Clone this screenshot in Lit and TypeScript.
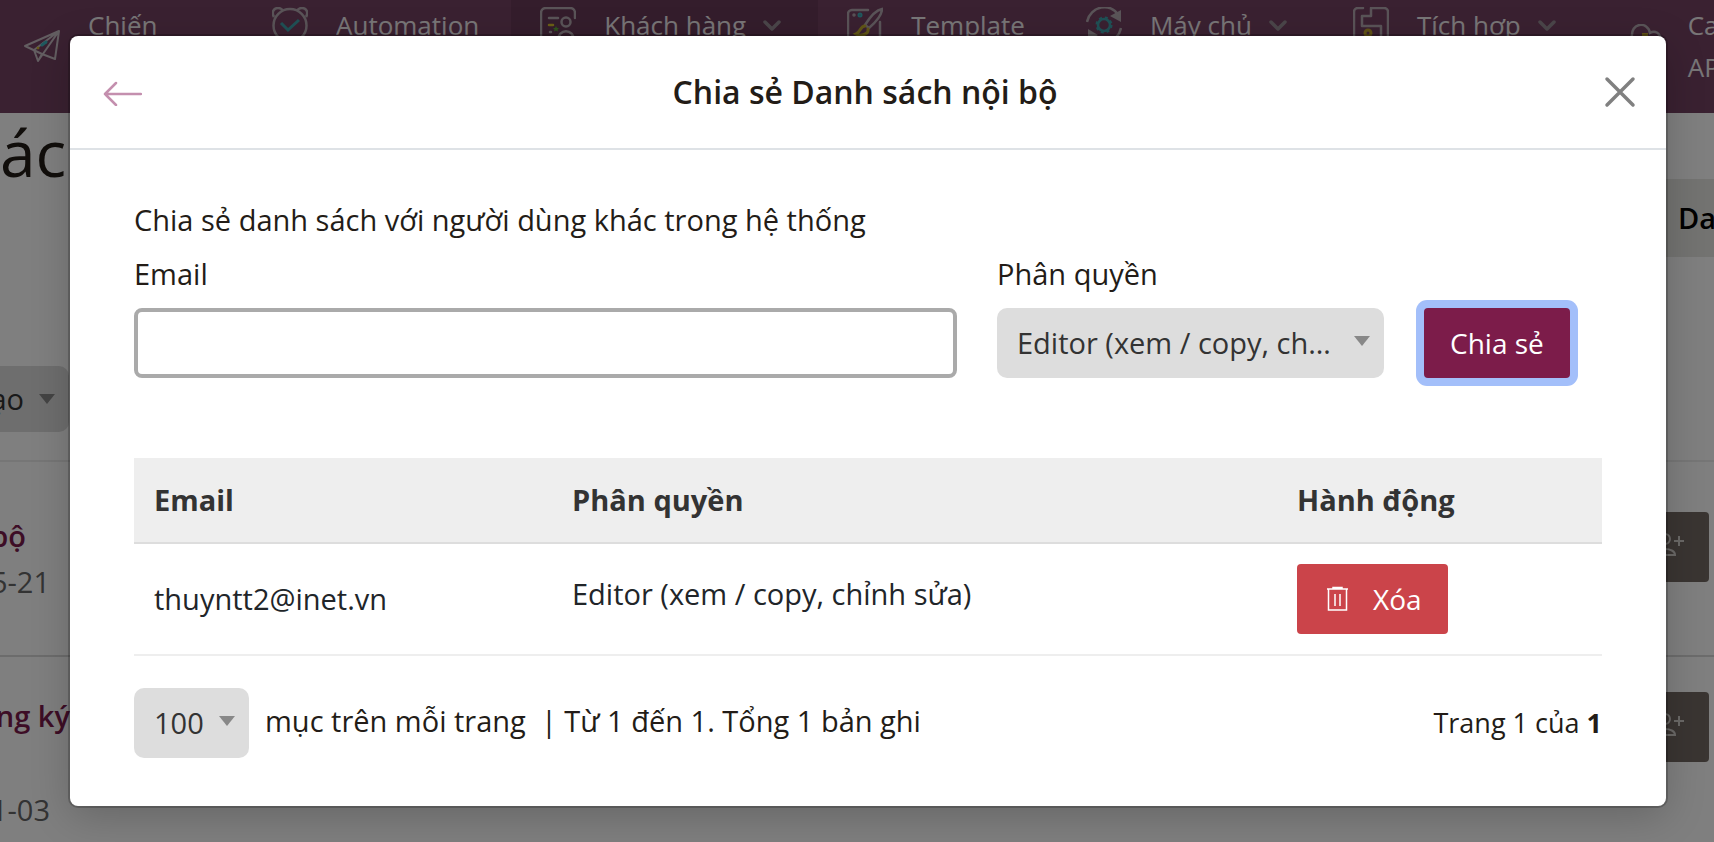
import { LitElement, html, css } from "lit";
import { customElement, state } from "lit/decorators.js";

const chevron = html`<svg class="chevron" viewBox="0 0 23 16" aria-hidden="true">
  <path d="M2 4l7 7 7-7" fill="none" stroke="#968d94" stroke-width="3.500" stroke-linecap="round" stroke-linejoin="round" />
</svg>`;

const icons = {
  plane: html`<svg class="icon" viewBox="0 0 36 36" fill="none" stroke="#c6bcc3" stroke-width="2" stroke-linejoin="round">
    <path d="M1 18L35 3L31 31L18 26ZM35 3L10 22L14 33L35 3M14 33L18 26" />
    <path d="M18 17l4-3" stroke="#3fb4bf" stroke-width="3" stroke-linecap="round" />
    <circle cx="14" cy="20" r="1" fill="#d5bd2c" stroke="#d5bd2c" stroke-width="1" />
  </svg>`,
  clock: html`<svg class="icon" viewBox="0 0 36 36" fill="none" stroke="#b4a8b0" stroke-width="2.500">
    <circle cx="18" cy="18.500" r="16.500" />
    <path d="M2 10C-1 5 2 1 6 1c3 0 4 1 5 3M34 10c3-5 0-9-4-9-3 0-4 1-5 3" />
    <path d="M9 16l7 7L27 13" stroke="#3fa3ad" stroke-width="3" />
  </svg>`,
  contacts: html`<svg class="icon" viewBox="0 0 36 36" fill="none" stroke="#b4a8b0" stroke-width="2.500" stroke-linecap="round">
    <path d="M8 35H6a5 5 0 0 1-5-5V6a5 5 0 0 1 5-5h24a5 5 0 0 1 5 5v5" />
    <circle cx="26" cy="15" r="4.500" />
    <path d="M18 34c0-13 16-13 16 0M9 11h9M10 25h1" />
    <path d="M9 18h4" stroke="#d5bd2c" />
    <path d="M16 19l1 2 2 0-1.500 1.500.5 2-2-1-2 1 .5-2L13 21l2 0z" fill="#5fa83a" stroke="none" />
  </svg>`,
  template: html`<svg class="icon" viewBox="0 0 36 36" fill="none" stroke="#b4a8b0" stroke-width="2.500" stroke-linecap="round">
    <path d="M21 3H5a4 4 0 0 0-4 4v25a3 3 0 0 0 3 3h26a3 3 0 0 0 3-3V15" />
    <path d="M18 18C23 10 29 3 35 2c0 6-6 13-13 19z" />
    <path d="M18 19c-5 0-4 6-9 8 5 3 13 0 12-5" stroke="#c2ad2c" stroke-width="3" />
    <circle cx="7" cy="8" r="1" stroke-width="1.500" /><circle cx="13" cy="8" r="1.500" stroke="#3fb4bf" stroke-width="2" />
  </svg>`,
  server: html`<svg class="icon" viewBox="0 0 36 36" fill="none" stroke="#b4a8b0" stroke-width="2.500">
    <path d="M1 15C4-1 25-5 32 8M35 21C32 37 11 41 4 28" />
    <path d="M35 3v12l-11-6zM2 34V22l10 6z" fill="#b4a8b0" stroke="none" />
    <circle cx="18" cy="18" r="6" stroke="#3fa3ad" stroke-width="2.500" />
    <circle cx="18" cy="18" r="7.500" stroke="#3fa3ad" stroke-width="2" stroke-dasharray="3 3" />
  </svg>`,
  puzzle: html`<svg class="icon" viewBox="0 0 36 36" fill="none" stroke="#b4a8b0" stroke-width="2.500" stroke-linejoin="round" stroke-linecap="round">
    <path d="M10 1H5a4 4 0 0 0-4 4v26a4 4 0 0 0 4 4h26a4 4 0 0 0 4-4V5a4 4 0 0 0-4-4H18v8H9v10h19v15" />
    <circle cx="15" cy="26" r="3" stroke="#c2a52c" stroke-width="3" />
  </svg>`,
  cloud: html`<svg class="icon" viewBox="0 0 36 36" fill="none" stroke="#b4a8b0" stroke-width="2.500">
    <path d="M6 27C-2 25-1 17 2 14 0-2 18-3 20 9c5-3 10 0 10 5 6 2 5 13-2 13z" />
    <path d="M12 9h6v8h-6z" fill="#c2a52c" stroke="none" />
  </svg>`,
};

const userPlus = html`<svg class="user-plus" viewBox="0 0 32 24" fill="none" stroke="#d6d2cf" stroke-width="2" aria-hidden="true">
  <circle cx="12" cy="6" r="5" /><path d="M2 22c0-8 20-8 20 0zM21 8h10M26 3v10" />
</svg>`;

@customElement("app-root")
export class AppRoot extends LitElement {
  @state() private nav = [
    { icon: icons.clock, label: "Automation", menu: false, active: false },
    { icon: icons.contacts, label: "Khách hàng", menu: true, active: true },
    { icon: icons.template, label: "Template", menu: false, active: false },
    { icon: icons.server, label: "Máy chủ", menu: true, active: false },
    { icon: icons.puzzle, label: "Tích hợp", menu: true, active: false },
  ];
  @state() private lists = [
    { name: "bộ", date: "5-21" },
    { name: "ng ký", date: "1-03" },
  ];
  @state() private shares = [{ email: "thuyntt2@inet.vn", role: "Editor (xem / copy, chỉnh sửa)" }];

  static styles = css`
    :host { display: block; position: relative; height: 100vh; overflow: hidden; background: #fff;
      font: 29px/42px "Open Sans", "Noto Sans", sans-serif; color: #231c17; }
    *, *::before { box-sizing: border-box; }
    button, input, select { font: inherit; margin: 0; }
    svg { display: block; flex: none; }
    .nav { display: flex; height: 113px; overflow: hidden; background: #754263; font-size: 26px; white-space: nowrap; }
    .nav-item { display: flex; flex: none; align-items: flex-start; padding: 4px 32px 0 29px; color: #fff; text-decoration: none; }
    .nav-item.active { background: #683a58; }
    .nav-item .label { margin-left: 28px; color: #fff; opacity: .9; }
    .nav-item .icon { margin-top: 3px; }
    .nav-item.wide { width: 243px; padding-left: 24px; white-space: normal; }
    .nav-item.wide .icon { margin-top: 24px; }
    .nav-item.last .icon { margin-top: 20px; }
    .nav-item.wide .label { width: 72px; }
    .nav-item.last { padding-left: 37px; padding-right: 0; white-space: normal; }
    .nav-item.last .label { width: 52px; margin-left: 22px; }
    .icon { width: 36px; height: 36px; }
    .chevron { width: 23px; height: 16px; margin: 14px 0 0 17px; }
    .title-row { display: flex; justify-content: space-between; height: 253px; }
    .title-row h1 { margin: 0; font-size: 64px; line-height: 80px; font-weight: 400; }
    .tab { width: 160px; height: 78px; margin-top: 66px; padding: 18px 0 0 124px; background: #e6e6e3; color: #000; font-weight: 600; overflow: hidden; }
    .toolbar { height: 96px; border-bottom: 2px solid #ececec; }
    .sort { display: flex; justify-content: flex-end; align-items: center; gap: 15px; width: 69px; height: 66px; padding-right: 14px;
      border-radius: 0 10px 10px 0; background: #ddd; color: #333; overflow: hidden; }
    .caret { flex: none; width: 16px; height: 10px; background: #888; clip-path: polygon(0 0, 100% 0, 50% 100%); }
    .list-row { display: flex; justify-content: space-between; height: 195px; border-bottom: 2px solid #d8d8d8; }
    .list-text { display: flex; flex-direction: column; align-items: flex-end; width: 70px; white-space: nowrap; }
    .list-text b { margin-top: 53px; color: #7b1a4c; font-weight: 600; }
    .date { color: #666; }
    .row-0 b { margin-right: 44px; } .row-0 .date { margin: 4px 20px 0 0; }
    .row-1 b { margin-top: 38px; } .row-1 .date { margin: 52px 20px 0 0; }
    .row-action { display: flex; align-items: center; justify-content: flex-end; width: 100px; height: 70px; margin: 50px 5px 0 0; padding: 0 24px 4px 0;
      border: 0; border-radius: 4px; background: #746a64; }
    .row-1 .row-action { margin-top: 35px; }
    .user-plus { width: 32px; height: 24px; }

    .overlay { position: absolute; inset: 0; padding: 36px 48px 36px 70px; background: rgb(0 0 0 / .5); }
    .modal { border-radius: 8px; background: #fff; box-shadow: 0 0 0 2px rgb(0 0 0 / .2), 0 10px 40px rgb(0 0 0 / .2); }
    .head { display: grid; grid-template-columns: 48px 1fr 60px; align-items: center; height: 114px; padding: 0 22px 0 28px; border-bottom: 2px solid #dee2e6; }
    .head h2 { margin: 0; text-align: center; font-size: 32px; font-weight: 600; }
    .ghost { display: flex; justify-content: center; justify-self: end; width: 48px; padding: 0; border: 0; background: none; }
    .body { padding: 49px 64px 48px; }
    .body p { margin: 0 0 12px; }
    .form { display: grid; grid-template-columns: 823fr 387fr 178fr; column-gap: 40px; align-items: end; }
    .field { display: flex; flex-direction: column; gap: 13px; min-width: 0; }
    .input { width: 100%; height: 70px; padding: 0 16px; border: 4px solid #aaa; border-radius: 8px; outline: 0; }
    .select { position: relative; display: flex; align-items: center; }
    .select .caret { position: absolute; right: 14px; top: 28px; pointer-events: none; }
    .select select { appearance: none; width: 100%; height: 70px; padding: 0 52px 0 20px; border: 0; border-radius: 10px; background: #ddd; color: #333; text-overflow: ellipsis; }
    .btn { display: inline-flex; align-items: center; height: 70px; padding: 0 26px; border: 0; border-radius: 4px; color: #fff; font-size: 28px; white-space: nowrap; }
    .share { justify-self: start; background: #7c1c4a; box-shadow: 0 0 0 8px #a3bffa; }
    .remove { gap: 22px; background: #cb444a; }
    table { width: 100%; margin-top: 80px; border-collapse: collapse; table-layout: fixed; }
    th, td { padding: 20px; text-align: left; }
    th { height: 85px; background: #eee; color: #333; font-weight: 700; }
    thead tr { border-bottom: 2px solid #ddd; }
    tbody tr { border-bottom: 2px solid #eee; color: #212529; }
    td.role { vertical-align: top; padding-top: 29px; }
    .c1 { width: 418px; } .c3 { width: 325px; }
    .foot { display: flex; align-items: center; margin-top: 32px; }
    .foot .select { width: 115px; }
    .foot .select select { padding-right: 36px; }
    .foot .info { margin: 0 auto 0 16px; padding-bottom: 4px; white-space: pre; }
    .foot .page { font-size: 27px; }
    .foot b { font-weight: 700; }
  `;

  render() {
    return html`
      <nav class="nav">
        <a class="nav-item wide" href="#">${icons.plane}<span class="label">Chiến dịch</span></a>
        ${this.nav.map((n) => html`<a class="nav-item ${n.active ? "active" : ""}" href="#">${n.icon}<span class="label">${n.label}</span>${n.menu ? chevron : ""}</a>`)}
        <a class="nav-item last" href="#">${icons.cloud}<span class="label">Call API</span></a>
      </nav>
      <main>
        <div class="title-row"><h1>ách</h1><div class="tab">Da</div></div>
        <div class="toolbar"><div class="sort"><span>ạo</span><i class="caret"></i></div></div>
        ${this.lists.map((l, i) => html`<div class="list-row row-${i}">
          <div class="list-text"><b>${l.name}</b><span class="date">${l.date}</span></div>
          <button class="row-action" aria-label="Chia sẻ">${userPlus}</button>
        </div>`)}
      </main>
      <div class="overlay">
        <section class="modal" role="dialog" aria-labelledby="title">
          <header class="head">
            <button class="ghost" aria-label="Quay lại">
              <svg width="40" height="28" viewBox="0 0 40 28" fill="none" stroke="#c48fae" stroke-width="2.500" stroke-linecap="round" stroke-linejoin="round"><path d="M14 5L3 16L14 27M3 16H39" /></svg>
            </button>
            <h2 id="title">Chia sẻ Danh sách nội bộ</h2>
            <button class="ghost" aria-label="Đóng">
              <svg width="32" height="32" viewBox="0 0 32 32" fill="none" stroke="#808080" stroke-width="3.500" stroke-linecap="round"><path d="M3 3L29 29M29 3L3 29" /></svg>
            </button>
          </header>
          <div class="body">
            <p>Chia sẻ danh sách với người dùng khác trong hệ thống</p>
            <div class="form">
              <div class="field"><label for="email">Email</label><input class="input" id="email" type="text" /></div>
              <div class="field"><label for="role">Phân quyền</label>
                <div class="select"><select id="role"><option>Editor (xem / copy, chỉnh sửa)</option></select><i class="caret"></i></div>
              </div>
              <button class="btn share">Chia sẻ</button>
            </div>
            <table>
              <thead><tr><th class="c1">Email</th><th>Phân quyền</th><th class="c3">Hành động</th></tr></thead>
              <tbody>${this.shares.map((s) => html`<tr><td>${s.email}</td><td class="role">${s.role}</td><td>
                <button class="btn remove">
                  <svg width="28" height="28" viewBox="0 0 28 28" fill="none" stroke="#fff" stroke-width="1.500"><path d="M4 4H25M10 4V2.500H19V4M5.500 4V25H23.500V4M12 9V21M17 9V21" /></svg>
                  Xóa
                </button></td></tr>`)}</tbody>
            </table>
            <div class="foot">
              <div class="select"><select aria-label="Số mục trên mỗi trang"><option>100</option></select><i class="caret"></i></div>
              <span class="info">mục trên mỗi trang  | Từ 1 đến 1. Tổng 1 bản ghi</span>
              <span class="page">Trang 1 của <b>1</b></span>
            </div>
          </div>
        </section>
      </div>
    `;
  }
}
